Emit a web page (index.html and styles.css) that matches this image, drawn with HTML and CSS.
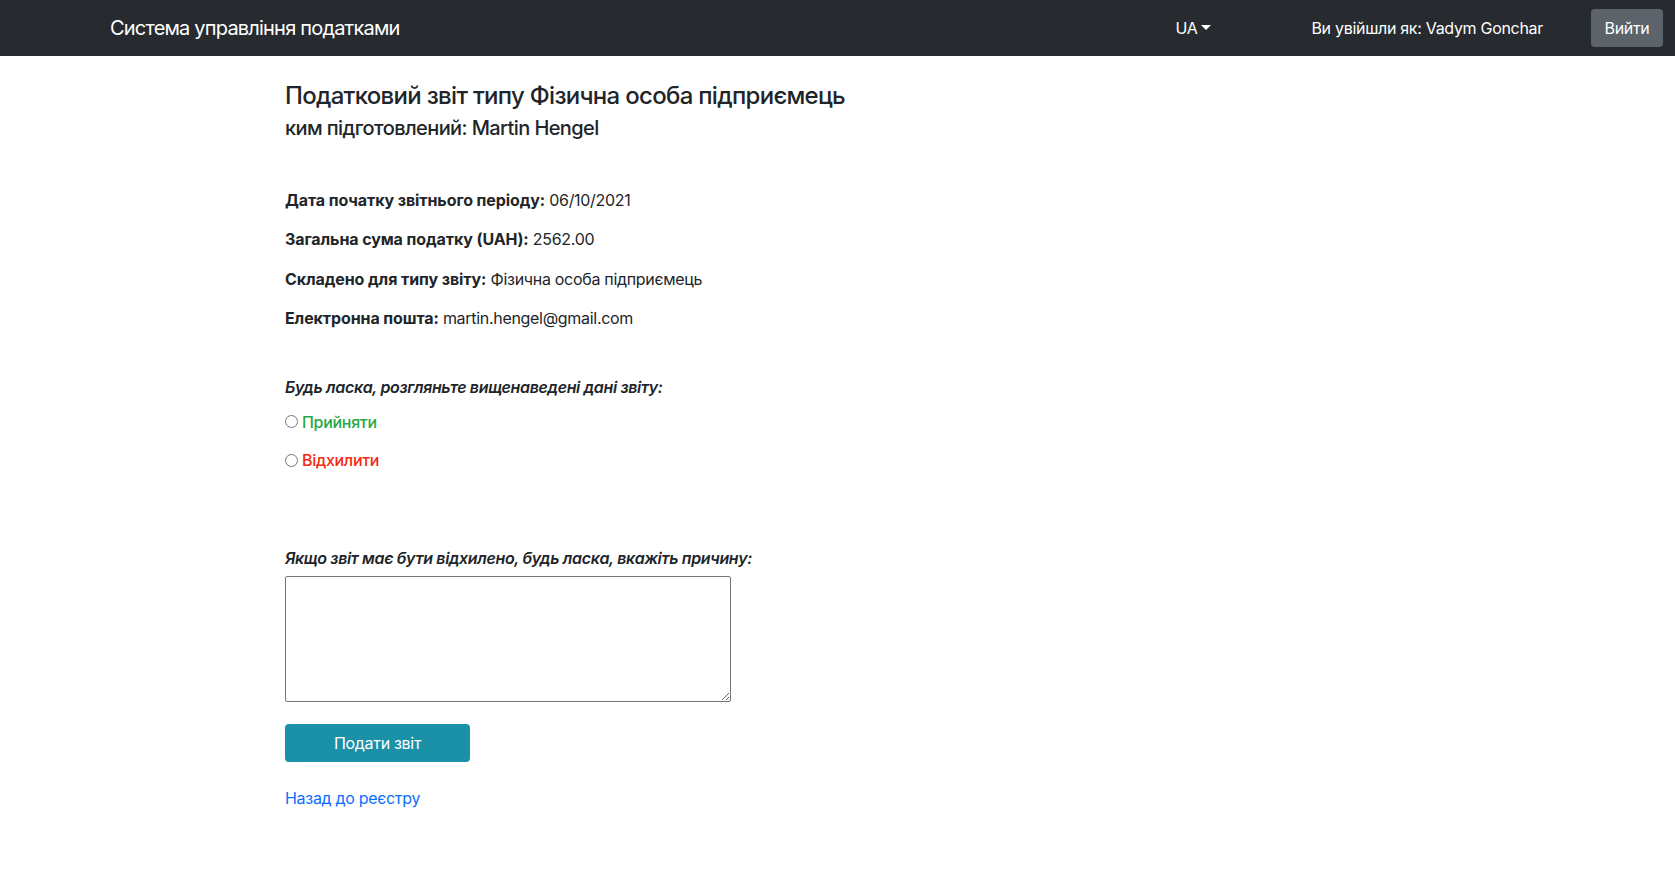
FILE: index.html
```html
<!DOCTYPE html>
<html lang="uk">
<head>
<meta charset="utf-8">
<title>Система управління податками</title>
<link rel="stylesheet" href="styles.css">
</head>
<body>
<nav class="navbar">
  <a class="brand" href="#">Система управління податками</a>
  <div class="nav-right">
    <a class="lang" href="#">UA<span class="caret"></span></a>
    <span class="user">Ви увійшли як: Vadym Gonchar</span>
    <button class="logout" type="button">Вийти</button>
  </div>
</nav>
<main class="container">
  <h4 class="title">Податковий звіт типу Фізична особа підприємець</h4>
  <h5 class="subtitle">ким підготовлений: Martin Hengel</h5>
  <div class="details">
    <p class="row"><b>Дата початку звітнього періоду:</b> 06/10/2021</p>
    <p class="row"><b>Загальна сума податку (UAH):</b> 2562.00</p>
    <p class="row"><b>Складено для типу звіту:</b> Фізична особа підприємець</p>
    <p class="row"><b>Електронна пошта:</b> martin.hengel@gmail.com</p>
  </div>
  <form class="review">
    <p class="prompt">Будь ласка, розгляньте вищенаведені дані звіту:</p>
    <label class="choice accept"><input type="radio" name="decision" class="radio">Прийняти</label>
    <label class="choice reject"><input type="radio" name="decision" class="radio">Відхилити</label>
    <label class="prompt reason" for="reason">Якщо звіт має бути відхилено, будь ласка, вкажіть причину:</label>
    <textarea id="reason" class="reason-box"></textarea>
    <button type="button" class="submit">Подати звіт</button>
  </form>
  <a class="back" href="#">Назад до реєстру</a>
</main>
</body>
</html>
```

FILE: styles.css
```css
* { box-sizing: border-box; }

html, body {
  margin: 0;
  padding: 0;
  background: #fff;
}

body {
  font-family: Inter, "Noto Sans", "Liberation Sans", sans-serif;
  font-size: 16px;
  line-height: 24px;
  letter-spacing: -0.3px;
  color: #212529;
}

.navbar {
  height: 56px;
  background: #272b30;
  display: flex;
  align-items: center;
  padding: 0 12px 0 110px;
}

.brand {
  color: #fff;
  text-decoration: none;
  font-size: 20px;
  line-height: 30px;
  letter-spacing: -0.8px;
}

.nav-right {
  margin-left: auto;
  display: flex;
  align-items: center;
}

.lang {
  color: #fff;
  text-decoration: none;
  font-size: 16px;
  display: flex;
  align-items: center;
}

.caret {
  display: inline-block;
  margin-left: 4px;
  width: 0;
  height: 0;
  border-top: 5px solid #fff;
  border-left: 5px solid transparent;
  border-right: 5px solid transparent;
  position: relative;
  top: -1px;
}

.user {
  color: #fff;
  margin-left: 100px;
  font-size: 16px;
}

.logout {
  margin-left: 48px;
  width: 72px;
  height: 38px;
  border: none;
  border-radius: 4px;
  background: #5c636a;
  color: #fff;
  font-family: inherit;
  font-size: 16px;
  letter-spacing: -0.3px;
  padding: 0;
}

.container {
  padding: 25px 0 40px 285px;
  display: flex;
  flex-direction: column;
  align-items: flex-start;
}

.title {
  margin: 0 0 6px;
  font-size: 24px;
  line-height: 29px;
  font-weight: 500;
  letter-spacing: -0.7px;
}

.subtitle {
  margin: 0 0 48px;
  font-size: 20px;
  line-height: 24px;
  font-weight: 500;
  letter-spacing: -0.6px;
}

.details {
  display: flex;
  flex-direction: column;
  gap: 15.4px;
}

.row {
  margin: 0;
}

.row b {
  font-weight: 700;
  letter-spacing: -0.1px;
}

.review {
  display: flex;
  flex-direction: column;
  align-items: flex-start;
  margin-top: 44.5px;
}

.prompt {
  margin: 0;
  font-style: italic;
  font-weight: 600;
  letter-spacing: -0.35px;
}

.choice {
  display: flex;
  align-items: center;
  font-weight: 500;
}

.accept {
  margin-top: 11px;
  color: #28a745;
}

.reject {
  margin-top: 14.5px;
  color: #f5290d;
}

.radio {
  margin: 0 4px 0 0;
  width: 13px;
  height: 13px;
}

.reason {
  margin-top: 74px;
}

.reason-box {
  margin-top: 6px;
  width: 446px;
  height: 126px;
  border: 1px solid #767676;
  border-radius: 2px;
  resize: both;
}

.submit {
  margin-top: 22px;
  width: 185px;
  height: 38px;
  border: none;
  border-radius: 4px;
  background: #1b91a8;
  color: #fff;
  font-family: inherit;
  font-size: 16px;
  letter-spacing: -0.3px;
}

.back {
  margin-top: 24px;
  color: #0d6efd;
  text-decoration: none;
}
```
